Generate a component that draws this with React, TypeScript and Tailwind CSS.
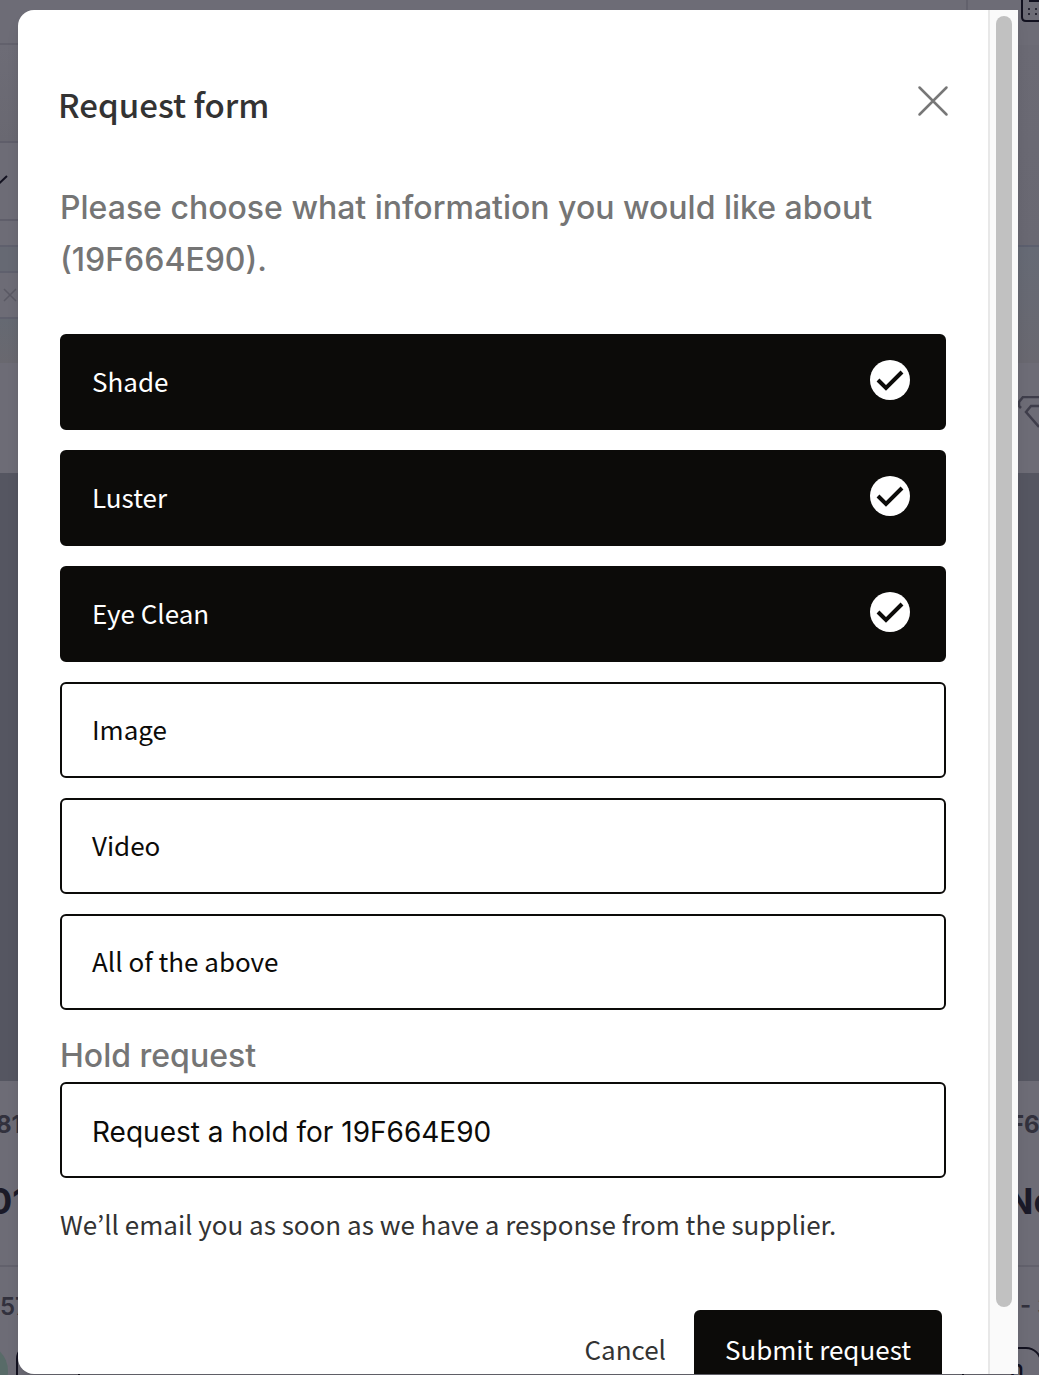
import React, { useState } from 'react';

const options = ['Shade', 'Luster', 'Eye Clean', 'Image', 'Video', 'All of the above'];

interface OptionRowProps {
  label: string;
  checked: boolean;
  onChange: () => void;
  className?: string;
}

function CheckIcon() {
  return (
    <svg viewBox="0 0 40 40" className="w-10 h-10 shrink-0" aria-hidden="true">
      <circle cx="20" cy="20" r="20" fill="#fff" />
      <path d="M8 20 L16 28 L32 12" fill="none" stroke="#0c0b09" strokeWidth="4" />
    </svg>
  );
}

function OptionRow({ label, checked, onChange, className = 'text-[26px] pb-1' }: OptionRowProps) {
  return (
    <label
      className={`flex items-center justify-between h-24 pl-[30px] pr-[34px] rounded-md border-2 border-[#0c0b09] cursor-pointer ${className} ${
        checked ? 'bg-[#0c0b09] text-white' : 'bg-white text-[#0c0b09]'
      }`}
    >
      <input type="checkbox" className="sr-only" checked={checked} onChange={onChange} />
      <span>{label}</span>
      {checked && <CheckIcon />}
    </label>
  );
}

function Backdrop() {
  return (
    <div className="h-full overflow-hidden bg-[#6d6c76] font-['Inter',sans-serif]" aria-hidden="true">
      <div className="flex justify-between h-[473px]">
        <div className="w-[18px]">
          <div className="h-[45px] border-b-2 border-[#62616c]" />
          <div className="h-[98px] bg-gradient-to-b from-[#6d6c76] to-[#696871] border-b-2 border-[#5f5e6a]" />
          <div className="flex items-center h-[78px] border-b-2 border-[#5f5e6a]">
            <svg viewBox="0 0 8 12" className="w-2 h-3" fill="none" stroke="#12111f" strokeWidth="2">
              <path d="M-5 3 L-1 8.5 L7 1" />
            </svg>
          </div>
          <div className="h-[26px] border-b-2 border-[#5f606d]" />
          <div className="h-[26px] bg-[#666973] border-b-2 border-[#5f606d]" />
          <div className="flex items-center justify-end h-[46px] pr-px border-b-2 border-[#5f606d]">
            <svg viewBox="0 0 14 14" className="w-3.5 h-3.5" fill="none" stroke="#5a5964" strokeWidth="1.5">
              <path d="M1 1 L13 13 M13 1 L1 13" />
            </svg>
          </div>
          <div className="h-11 bg-gradient-to-b from-[#656972] to-[#69686f]" />
        </div>
        <div className="w-[73px]">
          <div className="flex justify-between h-[45px]">
            <div className="w-0.5 bg-[#62616c]" />
            <svg viewBox="0 0 18 22" className="w-[18px] h-[22px]" fill="none" stroke="#12111f" strokeWidth="2">
              <path d="M1 0 V17 Q1 21 5 21 H18 M8 1 H18" />
              <path d="M7 9 h2 M14 9 h2 M7 14 h2 M14 14 h2" strokeWidth="1.5" />
            </svg>
          </div>
          <div className="h-[202px] bg-gradient-to-b from-[#6b6a74] to-[#696872] border-b-2 border-[#5c5f6e]" />
          <div className="h-[116px] bg-gradient-to-b from-[#666a75] to-[#696870]" />
          <div className="flex justify-end pt-[33px]">
            <svg viewBox="0 0 21 34" className="w-[21px] h-[34px]" fill="none" stroke="#3f3e4b" strokeWidth="2.5">
              <path d="M21 1 H5 L1 6 V10 L3 12 M21 10 H13 L8 16 L21 31" />
            </svg>
          </div>
        </div>
      </div>
      <div className="h-[608px] bg-[#555661]" />
      <div className="flex justify-between text-[#32313d] font-semibold">
        <div className="w-20 whitespace-nowrap">
          <div className="h-[186px] pt-6 border-b-2 border-[#62616c]">
            <p className="-ml-1 text-2xl leading-10 font-bold">81</p>
            <p className="-ml-3 mt-6 text-4xl leading-[64px] font-bold text-[#1b1a28]">01</p>
          </div>
          <p className="mt-5 text-2xl leading-10">57</p>
          <div className="flex items-start gap-2 mt-4">
            <div className="-ml-12 w-14 h-14 rounded-full bg-[#586b68]" />
            <div className="w-16 h-12 rounded-2xl border-2 border-[#12111f]" />
          </div>
        </div>
        <div className="w-[21px] whitespace-nowrap">
          <div className="h-[186px] pt-6 border-b-2 border-[#62616c]">
            <p className="-ml-2 text-2xl leading-10 font-bold">F6</p>
            <p className="-ml-3 mt-6 text-4xl leading-[64px] font-bold text-[#1b1a28]">No</p>
          </div>
          <p className="mt-5 ml-0.5 text-2xl leading-10">- 3</p>
          <div className="-ml-14 mt-5 w-20 h-12 rounded-2xl border-2 border-[#12111f] text-right pt-1 pr-4 text-2xl text-[#12111f] font-medium">
            n
          </div>
        </div>
      </div>
    </div>
  );
}

export default function App() {
  const [selected, setSelected] = useState<string[]>(['Shade', 'Luster', 'Eye Clean']);
  const [hold, setHold] = useState(false);

  const toggle = (name: string) => {
    setSelected((prev) => (prev.includes(name) ? prev.filter((n) => n !== name) : [...prev, name]));
  };

  return (
    <div className="relative h-screen overflow-hidden">
      <Backdrop />
      <div className="absolute inset-0 flex pt-2.5 pb-px pl-[18px] pr-[21px]">
        <div
          role="dialog"
          aria-labelledby="request-title"
          className="flex flex-1 min-w-0 overflow-hidden rounded-l-2xl bg-white shadow-lg font-['Noto_Sans_CJK_KR',sans-serif]"
        >
          <form className="flex-1 min-w-0 px-[42px] overflow-hidden" onSubmit={(e) => e.preventDefault()}>
            <div className="flex items-start justify-between pt-[74px]">
              <h1 id="request-title" className="-ml-0.5 text-[33px] leading-10 font-medium text-[#333333]">
                Request form
              </h1>
              <button type="button" aria-label="Close" className="-mr-1 p-px">
                <svg viewBox="0 0 32 32" className="w-8 h-8" fill="none" stroke="#777" strokeWidth="2.5" strokeLinecap="round">
                  <path d="M2.5 2.5 L29.5 29.5 M29.5 2.5 L2.5 29.5" />
                </svg>
              </button>
            </div>

            <fieldset className="mt-[58px]">
              <legend className="mb-12 font-['Inter',sans-serif] text-[32px] leading-[52px] font-medium text-[#757575]">
                Please choose what information you would like about (19F664E90).
              </legend>
              <div className="flex flex-col gap-5">
                {options.map((name) => (
                  <OptionRow
                    key={name}
                    label={name}
                    checked={selected.includes(name)}
                    onChange={() => toggle(name)}
                  />
                ))}
              </div>
            </fieldset>

            <h2 className="mt-5 font-['Inter',sans-serif] text-[32px] leading-[52px] font-medium text-[#757575]">
              Hold request
            </h2>
            <OptionRow
              label="Request a hold for 19F664E90"
              checked={hold}
              onChange={() => setHold(!hold)}
              className="font-['Inter',sans-serif] text-[28px] pt-1"
            />

            <p className="mt-7 text-[26px] leading-9 text-[#333333]">
              We’ll email you as soon as we have a response from the supplier.
            </p>

            <div className="flex items-center justify-end gap-7 mt-[68px] pr-1 text-[26px]">
              <button type="button" className="text-[#333333]">Cancel</button>
              <button type="submit" className="w-[248px] h-[76px] rounded-md bg-[#0c0b09] text-white">
                Submit request
              </button>
            </div>
          </form>

          <div className="w-[30px] shrink-0 px-1.5 py-1.5 border-l-2 border-[#e8e8e8] bg-[#fafafa]">
            <div className="w-4 h-[95.5%] rounded-full bg-[#c1c1c1]" />
          </div>
        </div>
      </div>
    </div>
  );
}
